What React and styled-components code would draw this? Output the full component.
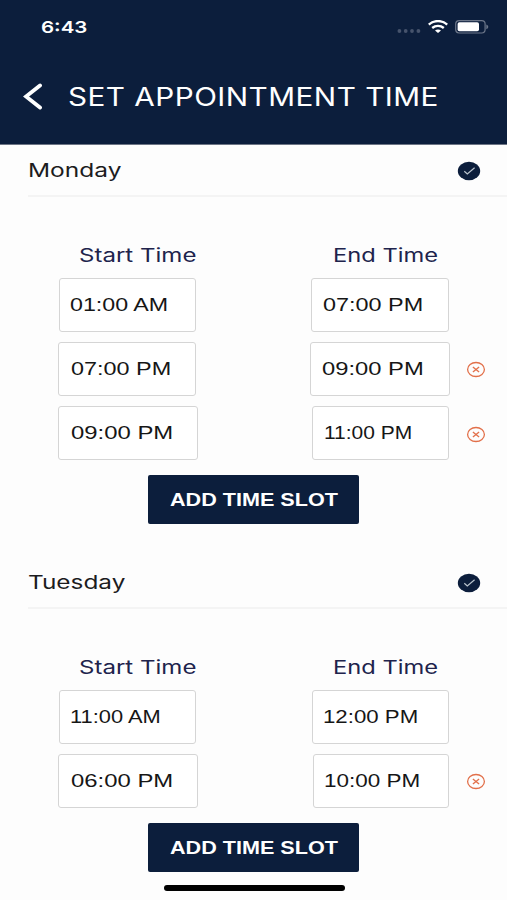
import React, { useLayoutEffect, useRef, useState } from 'react';
import styled, { createGlobalStyle, css } from 'styled-components';

const navy = '#0c1e3c';
const orange = '#e2704a';

const GlobalStyle = createGlobalStyle`
  * {
    box-sizing: border-box;
  }

  body {
    margin: 0;
    background: #fdfdfd;
    font-family: Inter, 'Liberation Sans', sans-serif;
  }
`;

const Screen = styled.div`
  display: flex;
  flex-direction: column;
  width: 507px;
  height: 900px;
  overflow: hidden;
  background: #fdfdfd;
`;

const Header = styled.header`
  flex: none;
  height: 145px;
  border-bottom: 1px solid #6d7585;
  background: ${navy};
  color: #fff;
`;

const StatusBar = styled.div`
  display: flex;
  align-items: center;
  justify-content: space-between;
  height: 53px;
  padding: 0 18px 0 41px;
`;

const StatusIcons = styled.div`
  display: flex;
  align-items: center;
  gap: 7px;

  & svg {
    display: block;
  }
`;

const TitleBar = styled.div`
  display: flex;
  align-items: center;
  height: 88px;
  padding-left: 23px;
`;

const BackButton = styled.button`
  width: 45px;
  padding: 0;
  border: 0;
  background: none;
  line-height: 0;
  text-align: left;
  cursor: pointer;
`;

const textStyles = {
  clock: css`
    font-size: 16.5px;
    font-weight: 600;
  `,
  title: css`
    font-size: 25px;
    letter-spacing: 0.4px;
  `,
  day: css`
    color: #1c1c1e;
    font-size: 18.5px;
  `,
  label: css`
    color: #20234c;
    font-size: 18.5px;
  `,
  time: css`
    color: #161616;
    font-size: 18.5px;
  `,
  button: css`
    color: #fff;
    font-family: 'Liberation Sans', Arial, sans-serif;
    font-size: 18.5px;
    font-weight: 700;
  `,
};

const TextBox = styled.span`
  display: block;
  width: ${props => props.$width}px;
  line-height: 24px;
  text-align: left;
  white-space: nowrap;
  ${props => textStyles[props.$variant]}

  & span {
    display: inline-block;
    transform-origin: 0 50%;
  }
`;

const Day = styled.section`
  height: ${props => props.$height}px;
`;

const DayHeader = styled.div`
  display: flex;
  align-items: center;
  justify-content: space-between;
  height: 52px;
  margin-left: 28px;
  padding-right: 26px;
  border-bottom: 2px solid #f4f4f4;

  & svg {
    display: block;
    margin-top: 1px;
  }
`;

const Labels = styled.div`
  display: grid;
  grid-template-columns: 254px 1fr;
  padding: 46px 0 0 79px;
  margin-bottom: 11px;
`;

const SlotRow = styled.div`
  display: grid;
  grid-template-columns: 252px 156px 1fr;
  align-items: center;
  height: 53px;
  margin: 0 0 11.2px 58px;
`;

const TimeField = styled.button`
  display: flex;
  align-items: center;
  width: ${props => props.$width}px;
  height: 53.5px;
  margin-left: ${props => props.$indent}px;
  padding: 0 0 0 ${props => props.$pad}px;
  border: 1.5px solid #d5d5d5;
  border-radius: 3px;
  background: #fff;
  text-align: left;
  cursor: pointer;
`;

const RemoveButton = styled.button`
  width: 20px;
  padding: 2px 0 0;
  border: 0;
  background: none;
  line-height: 0;
  cursor: pointer;
`;

const AddButton = styled.button`
  display: flex;
  align-items: center;
  justify-content: center;
  width: 211px;
  height: 49.5px;
  margin: 15.5px 0 0 148.4px;
  padding: 1px 0 0;
  border: 0;
  border-radius: 2px;
  background: ${navy};
  cursor: pointer;
`;

const HomeIndicator = styled.div`
  position: absolute;
  top: 885px;
  left: 163.5px;
  width: 181px;
  height: 6px;
  border-radius: 3px;
  background: #000;
`;

// Widens the glyphs until the text takes up the given width.
const WideText = ({ variant, width, children }) => {
  const ref = useRef(null);
  const [scale, setScale] = useState(1);

  useLayoutEffect(() => {
    setScale(width / ref.current.offsetWidth);
  }, [width, children]);

  return (
    <TextBox $variant={variant} $width={width}>
      <span ref={ref} style={{ transform: `scaleX(${scale})` }}>{children}</span>
    </TextBox>
  );
};

const BackIcon = () => (
  <svg width="20" height="28" viewBox="0 0 20 28" fill="none">
    <path d="M17 2.500 3 13.500l14 11" stroke="#fff" strokeWidth="3.900" strokeLinecap="round" />
  </svg>
);

const SignalIcon = () => (
  <svg width="24" height="14" viewBox="0 0 24 14" fill="#46536c">
    <circle cx="2.400" cy="11" r="1.900" />
    <circle cx="8.700" cy="11" r="1.900" />
    <circle cx="15" cy="11" r="1.900" />
    <circle cx="21.400" cy="11" r="1.900" />
  </svg>
);

const WifiIcon = () => (
  <svg width="20" height="13" viewBox="0 0 20 13" fill="none" stroke="#fff" strokeWidth="2.400">
    <path d="M.8 4.600C6-.1 14-.1 19.200 4.600" />
    <path d="M4.200 8c3.400-2.900 8.200-2.900 11.600 0" />
    <path d="M7 10.500c1.700-1.500 4.300-1.500 6 0l-3 2.500z" fill="#fff" stroke="none" />
  </svg>
);

const BatteryIcon = () => (
  <svg width="34" height="14" viewBox="0 0 34 14" fill="none">
    <rect x=".7" y=".7" width="29.400" height="12.300" rx="3.400" stroke="#6d778a" strokeWidth="1.200" />
    <rect x="2.600" y="2.300" width="21.400" height="9" rx="1.800" fill="#fff" />
    <path d="M31.300 4.600c2.600 1 2.600 3.700 0 4.700z" fill="#6d778a" />
  </svg>
);

const CheckIcon = () => (
  <svg width="24" height="20" viewBox="0 0 24 20" fill="none">
    <ellipse cx="12" cy="10" rx="11.200" ry="9.200" fill={navy} />
    <path d="m7.300 10.300 3 2.700 7.300-6.200" stroke="#b9c3cc" strokeWidth="1.200" />
  </svg>
);

const RemoveIcon = () => (
  <svg width="20" height="17" viewBox="0 0 20 17" fill="none" stroke={orange}>
    <ellipse cx="10" cy="8.500" rx="8.400" ry="7" strokeWidth="1.300" />
    <path d="m6.900 5.900 6.200 5.200M13.100 5.900l-6.200 5.200" strokeWidth="1.300" />
  </svg>
);

const days = [
  {
    name: 'Monday',
    nameWidth: 94,
    height: 412,
    slots: [
      {
        start: { time: '01:00 AM', textWidth: 98, indent: 0.5, width: 137, pad: 10.5 },
        end: { time: '07:00 PM', textWidth: 100, indent: 1, width: 138, pad: 11 },
      },
      {
        start: { time: '07:00 PM', textWidth: 100, indent: 0, width: 138, pad: 11.5 },
        end: { time: '09:00 PM', textWidth: 101.5, indent: 0, width: 140, pad: 11 },
        removable: true,
      },
      {
        start: { time: '09:00 PM', textWidth: 102, indent: 0, width: 140, pad: 11.5 },
        end: { time: '11:00 PM', textWidth: 88.5, indent: 2, width: 137, pad: 10.5 },
        removable: true,
      },
    ],
  },
  {
    name: 'Tuesday',
    nameWidth: 97.5,
    height: 343,
    slots: [
      {
        start: { time: '11:00 AM', textWidth: 91, indent: 0.5, width: 137, pad: 10 },
        end: { time: '12:00 PM', textWidth: 95, indent: 2, width: 137, pad: 9.5 },
      },
      {
        start: { time: '06:00 PM', textWidth: 102, indent: 0, width: 140, pad: 11.5 },
        end: { time: '10:00 PM', textWidth: 96, indent: 3, width: 136, pad: 9.5 },
        removable: true,
      },
    ],
  },
];

const Field = ({ time, textWidth, indent, width, pad }) => (
  <TimeField type="button" $indent={indent} $width={width} $pad={pad}>
    <WideText variant="time" width={textWidth}>{time}</WideText>
  </TimeField>
);

const DaySection = ({ day }) => (
  <Day $height={day.height}>
    <DayHeader>
      <WideText variant="day" width={day.nameWidth}>{day.name}</WideText>
      <CheckIcon />
    </DayHeader>
    <Labels>
      <WideText variant="label" width={117}>Start Time</WideText>
      <WideText variant="label" width={105}>End Time</WideText>
    </Labels>
    {day.slots.map(slot => (
      <SlotRow key={slot.start.time}>
        <Field {...slot.start} />
        <Field {...slot.end} />
        {slot.removable && (
          <RemoveButton type="button" aria-label="Remove"><RemoveIcon /></RemoveButton>
        )}
      </SlotRow>
    ))}
    <AddButton type="button">
      <WideText variant="button" width={168}>ADD TIME SLOT</WideText>
    </AddButton>
  </Day>
);

const App = () => (
  <Screen>
    <GlobalStyle />
    <Header>
      <StatusBar>
        <WideText variant="clock" width={46}>6:43</WideText>
        <StatusIcons>
          <SignalIcon />
          <WifiIcon />
          <BatteryIcon />
        </StatusIcons>
      </StatusBar>
      <TitleBar>
        <BackButton type="button" aria-label="Back"><BackIcon /></BackButton>
        <WideText variant="title" width={370.5}>SET APPOINTMENT TIME</WideText>
      </TitleBar>
    </Header>
    {days.map(day => <DaySection key={day.name} day={day} />)}
    <HomeIndicator />
  </Screen>
);

export default App;
